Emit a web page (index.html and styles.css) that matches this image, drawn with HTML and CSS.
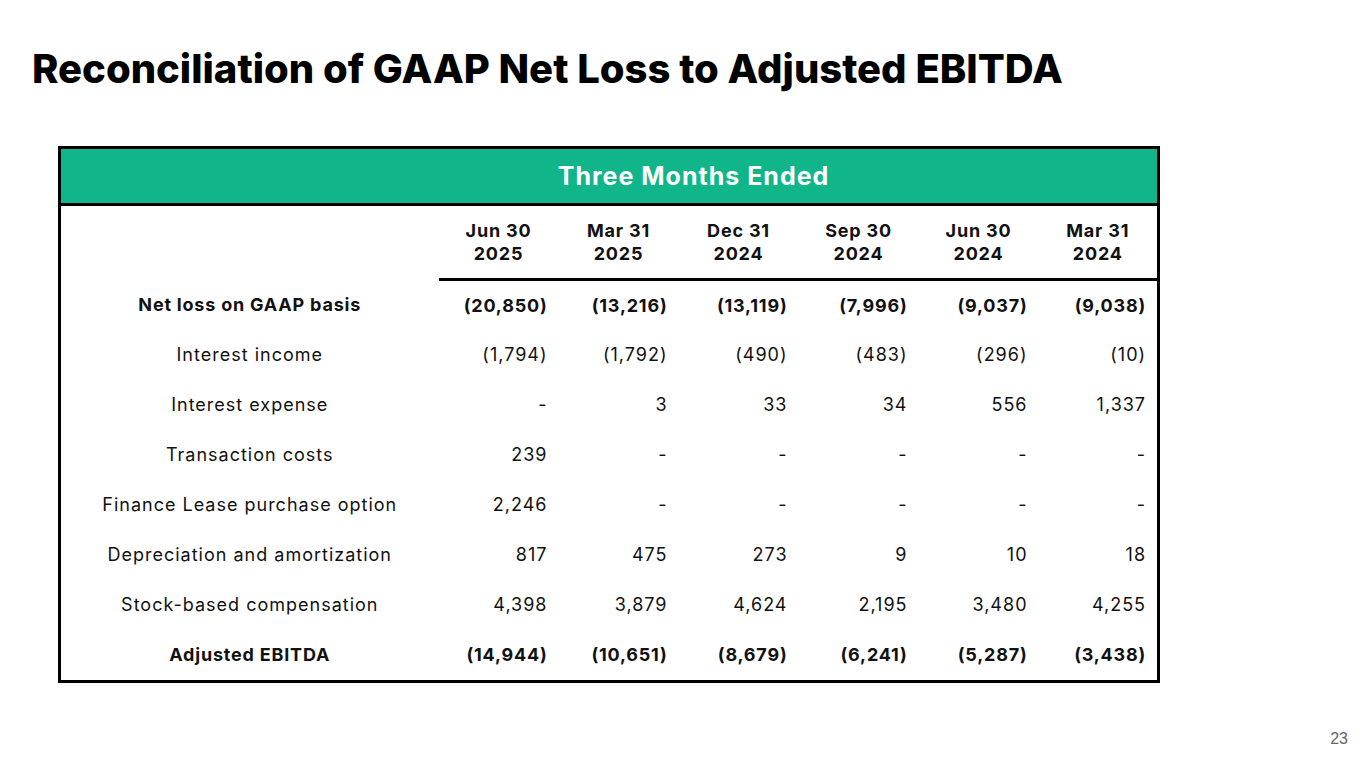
FILE: index.html
```html
<!DOCTYPE html>
<html lang="en">
<head>
<meta charset="utf-8">
<title>Reconciliation of GAAP Net Loss to Adjusted EBITDA</title>
<link rel="stylesheet" href="styles.css">
</head>
<body>
<div class="slide">
  <h1 class="title">Reconciliation of GAAP Net Loss to Adjusted EBITDA</h1>
  <div class="table-wrap">
    <table class="recon">
      <colgroup>
        <col class="col-label">
        <col class="col-num"><col class="col-num"><col class="col-num">
        <col class="col-num"><col class="col-num"><col class="col-num">
      </colgroup>
      <thead>
        <tr class="band">
          <th colspan="7" class="band-cell">Three Months Ended</th>
        </tr>
        <tr class="periods">
          <th class="label-col"></th>
          <th class="period">Jun 30<br>2025</th>
          <th class="period">Mar 31<br>2025</th>
          <th class="period">Dec 31<br>2024</th>
          <th class="period">Sep 30<br>2024</th>
          <th class="period">Jun 30<br>2024</th>
          <th class="period">Mar 31<br>2024</th>
        </tr>
      </thead>
      <tbody>
        <tr class="strong first">
          <td class="label">Net loss on GAAP basis</td>
          <td class="num">(20,850)</td><td class="num">(13,216)</td><td class="num">(13,119)</td><td class="num">(7,996)</td><td class="num">(9,037)</td><td class="num">(9,038)</td>
        </tr>
        <tr>
          <td class="label">Interest income</td>
          <td class="num">(1,794)</td><td class="num">(1,792)</td><td class="num">(490)</td><td class="num">(483)</td><td class="num">(296)</td><td class="num">(10)</td>
        </tr>
        <tr>
          <td class="label">Interest expense</td>
          <td class="num">-</td><td class="num">3</td><td class="num">33</td><td class="num">34</td><td class="num">556</td><td class="num">1,337</td>
        </tr>
        <tr>
          <td class="label">Transaction costs</td>
          <td class="num">239</td><td class="num">-</td><td class="num">-</td><td class="num">-</td><td class="num">-</td><td class="num">-</td>
        </tr>
        <tr>
          <td class="label">Finance Lease purchase option</td>
          <td class="num">2,246</td><td class="num">-</td><td class="num">-</td><td class="num">-</td><td class="num">-</td><td class="num">-</td>
        </tr>
        <tr>
          <td class="label">Depreciation and amortization</td>
          <td class="num">817</td><td class="num">475</td><td class="num">273</td><td class="num">9</td><td class="num">10</td><td class="num">18</td>
        </tr>
        <tr>
          <td class="label">Stock-based compensation</td>
          <td class="num">4,398</td><td class="num">3,879</td><td class="num">4,624</td><td class="num">2,195</td><td class="num">3,480</td><td class="num">4,255</td>
        </tr>
        <tr class="strong">
          <td class="label">Adjusted EBITDA</td>
          <td class="num">(14,944)</td><td class="num">(10,651)</td><td class="num">(8,679)</td><td class="num">(6,241)</td><td class="num">(5,287)</td><td class="num">(3,438)</td>
        </tr>
      </tbody>
    </table>
  </div>
  <div class="footer"><span class="page-num">23</span></div>
</div>
</body>
</html>
```

FILE: styles.css
```css
* { box-sizing: border-box; }

html, body {
  margin: 0;
  padding: 0;
  background: #ffffff;
}

.slide {
  width: 1365px;
  height: 768px;
  display: flex;
  flex-direction: column;
  font-family: "Inter", "Open Sans", sans-serif;
  color: #111111;
}

.title {
  margin: 0;
  padding: 44px 0 0 32px;
  font-family: "Inter", sans-serif;
  font-weight: 800;
  font-size: 40px;
  line-height: 50px;
  letter-spacing: 0;
  color: #000000;
  white-space: nowrap;
}

.table-wrap {
  padding: 52px 0 0 58px;
}

.recon {
  border-collapse: collapse;
  border: 3px solid #000000;
  table-layout: fixed;
  width: 1102px;
}

.col-label { width: 379px; }
.col-num { width: 120px; }

.band-cell {
  background: #10b68a;
  color: #ffffff;
  height: 57px;
  padding: 0 0 0 169px;
  font-size: 25px;
  letter-spacing: 1px;
  font-weight: 700;
  text-align: center;
  border-bottom: 3px solid #000000;
}

.period {
  height: 75px;
  font-size: 18px;
  line-height: 23px;
  letter-spacing: 0.8px;
  font-weight: 700;
  text-align: center;
  vertical-align: middle;
  border-bottom: 3px solid #000000;
  padding: 0;
  white-space: nowrap;
}

.periods .label-col {
  border-bottom: none;
}

.recon td {
  height: 50px;
  font-size: 18px;
  letter-spacing: 1px;
  font-weight: 400;
  padding: 0;
  vertical-align: middle;
  white-space: nowrap;
}

.recon tbody tr:last-child td {
  height: 52px;
}

.label {
  text-align: center;
}

.recon td.num {
  text-align: right;
  padding-right: 11px;
}

.recon .strong td {
  font-weight: 700;
  letter-spacing: 0.8px;
}

.footer {
  margin-top: auto;
  display: flex;
  justify-content: flex-end;
  padding: 0 17px 20px 0;
}

.page-num {
  font-family: "Liberation Sans", Arial, sans-serif;
  font-size: 16px;
  color: #666666;
}
```
